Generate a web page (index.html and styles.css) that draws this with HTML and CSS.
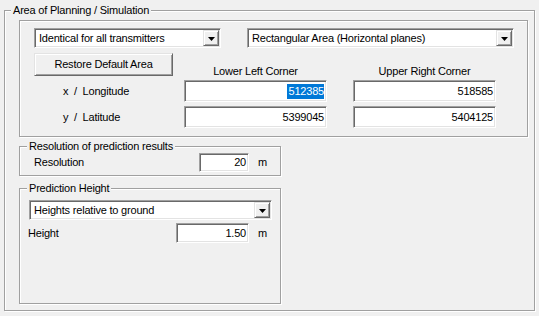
FILE: index.html
```html
<!DOCTYPE html>
<html>
<head>
<meta charset="utf-8">
<link rel="stylesheet" href="styles.css">
</head>
<body>
<div class="group outer">
  <span class="legend">Area of Planning / Simulation</span>
  <div class="area">
    <div class="combos">
      <div class="combo c1"><span class="val">Identical for all transmitters</span><span class="dd"><svg width="7" height="4" viewBox="0 0 7 4"><path d="M0 0H7L3.5 4Z" fill="#000"/></svg></span></div>
      <div class="combo c2"><span class="val">Rectangular Area (Horizontal planes)</span><span class="dd"><svg width="7" height="4" viewBox="0 0 7 4"><path d="M0 0H7L3.5 4Z" fill="#000"/></svg></span></div>
    </div>
    <div class="grid">
      <div class="btn">Restore Default Area</div>
      <div class="colhead">Lower Left Corner</div>
      <div class="colhead">Upper Right Corner</div>
      <div class="lbl">x  /  Longitude</div>
      <div class="edit"><span class="sel">512385</span></div>
      <div class="edit">518585</div>
      <div class="lbl">y  /  Latitude</div>
      <div class="edit">5399045</div>
      <div class="edit">5404125</div>
    </div>
  </div>
  <div class="group res">
    <span class="legend">Resolution of prediction results</span>
    <div class="row res-row">
      <span class="rlabel">Resolution</span>
      <div class="edit small">20</div>
      <span class="unit">m</span>
    </div>
  </div>
  <div class="group ph">
    <span class="legend">Prediction Height</span>
    <div class="combo c3"><span class="val">Heights relative to ground</span><span class="dd"><svg width="7" height="4" viewBox="0 0 7 4"><path d="M0 0H7L3.5 4Z" fill="#000"/></svg></span></div>
    <div class="row h-row">
      <span class="hlabel">Height</span>
      <div class="edit hval">1.50</div>
      <span class="unit">m</span>
    </div>
  </div>
</div>
</body>
</html>
```
FILE: styles.css
```css
* { box-sizing: border-box; }
html, body {
  margin: 0;
  padding: 0;
  background: #f0f0f0;
  width: 539px;
  height: 316px;
  overflow: hidden;
  font-family: "Liberation Sans", Arial, sans-serif;
  font-size: 11px;
  line-height: 13px;
  letter-spacing: -0.2px;
  color: #000;
}
.group {
  position: relative;
  border: 1px solid #a0a0a0;
  box-shadow: inset 1px 1px 0 #fff, 1px 1px 0 #fff;
}
.legend {
  position: absolute;
  top: -7px;
  left: 7px;
  padding: 0 2px;
  background: #f0f0f0;
  white-space: nowrap;
}
.outer {
  margin: 10px 0 0 4px;
  width: 531px;
  height: 301px;
  padding: 9px 0 0 14px;
}
.outer > .legend { left: 6px; }
.area {
  width: 509px;
  height: 117px;
  border: 1px solid #a0a0a0;
  box-shadow: inset 1px 1px 0 #fff, 1px 1px 0 #fff;
  padding: 7px 0 0 14px;
}
.combos {
  display: flex;
  gap: 26px;
}
.combo {
  display: flex;
  align-items: center;
  justify-content: space-between;
  height: 20px;
  background: #fff;
  border: 1px solid;
  border-color: #a0a0a0 #fff #fff #a0a0a0;
  box-shadow: inset 1px 1px 0 #696969, inset -1px -1px 0 #e3e3e3;
  padding: 1px;
}
.combo .val {
  padding-left: 3px;
  white-space: nowrap;
}
.c1 { width: 187px; }
.c2 { width: 267px; }
.c3 { width: 243px; margin: 11px 0 0 9px; }
.dd {
  width: 16px;
  height: 16px;
  display: flex;
  align-items: center;
  justify-content: center;
  background: #f0f0f0;
  border: 1px solid;
  border-color: #e3e3e3 #696969 #696969 #e3e3e3;
  box-shadow: inset 1px 1px 0 #fff, inset -1px -1px 0 #a0a0a0;
  flex: none;
}
.dd svg { display: block; margin-top: 1px; }
.grid {
  display: grid;
  grid-template-columns: 124px 143px 143px;
  grid-template-rows: 23px 22px 22px;
  column-gap: 26px;
  row-gap: 4px;
  margin-top: 5px;
}
.btn {
  width: 139px;
  height: 23px;
  display: flex;
  align-items: center;
  justify-content: center;
  background: #f0f0f0;
  border: 1px solid;
  border-color: #e3e3e3 #696969 #696969 #e3e3e3;
  box-shadow: inset 1px 1px 0 #fff, inset -1px -1px 0 #a0a0a0;
  white-space: nowrap;
}
.colhead {
  align-self: end;
  text-align: center;
  margin-bottom: -2px;
  white-space: nowrap;
}
.lbl {
  align-self: center;
  padding-left: 29px;
  white-space: pre;
}
.edit {
  display: flex;
  align-items: center;
  justify-content: flex-end;
  background: #fff;
  border: 1px solid;
  border-color: #a0a0a0 #fff #fff #a0a0a0;
  box-shadow: inset 1px 1px 0 #696969, inset -1px -1px 0 #e3e3e3;
  padding: 0 2px 0 2px;
  white-space: nowrap;
}
.sel {
  background: #0078d7;
  color: #fff;
  line-height: 15px;
  padding-left: 1px;
}
.res {
  margin-top: 9px;
  width: 262px;
  height: 30px;
}
.row {
  display: flex;
  align-items: center;
}
.res-row { padding: 6px 0 0 14px; }
.rlabel { width: 165px; }
.small { width: 50px; height: 19px; }
.unit { margin-left: 9px; }
.ph {
  margin-top: 12px;
  width: 262px;
  height: 116px;
}
.h-row { margin-top: 3px; padding-left: 8px; }
.hlabel { width: 148px; }
.hval { width: 73px; height: 20px; }
```
